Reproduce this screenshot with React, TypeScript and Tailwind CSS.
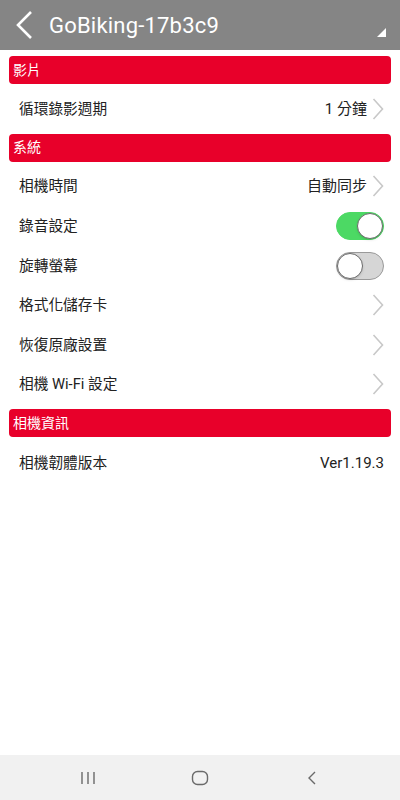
import React from "react";

const font = { fontFamily: '"Roboto", "Noto Sans CJK TC", sans-serif' };

function Chevron() {
  return (
    <svg width="12" height="24" viewBox="0 0 12 24" className="ml-[5px] shrink-0">
      <path d="M1.5 2 L10.5 12 L1.5 22" fill="none" stroke="#c8c8c8" strokeWidth="1.6" />
    </svg>
  );
}

function Toggle({ on }: { on: boolean }) {
  return (
    <div
      className={`relative w-[48px] h-[28px] rounded-full border ${
        on ? "bg-[#4cd964] border-[#4cd964]" : "bg-[#d6d6d6] border-[#9a9a9a]"
      }`}
    >
      <div
        className={`absolute top-[0px] w-[26px] h-[26px] rounded-full bg-white border border-[#6a6a6a] shadow ${
          on ? "right-[0px]" : "left-[0px]"
        }`}
      />
    </div>
  );
}

function Section({ title }: { title: string }) {
  return (
    <div className="mx-[9px] h-[28px] rounded-[4px] bg-[#e8002a] flex items-center pl-[4px] text-white text-[14px]">
      {title}
    </div>
  );
}

function Row({ label, value, chevron, toggle }: { label: string; value?: string; chevron?: boolean; toggle?: boolean }) {
  return (
    <div className="h-[39.6px] flex items-center justify-between pl-[19px] pr-[16px] text-[14.7px] text-[#222]">
      <span>{label}</span>
      <div className="flex items-center text-[15px]">
        {value && <span>{value}</span>}
        {chevron && <Chevron />}
        {toggle !== undefined && <Toggle on={toggle} />}
      </div>
    </div>
  );
}

export default function App() {
  return (
    <div className="w-[400px] h-[800px] bg-white flex flex-col" style={font}>
      {/* header */}
      <div className="h-[50px] bg-[#858585] flex items-center relative shrink-0">
        <svg width="20" height="30" viewBox="0 0 20 30" className="ml-[14px]">
          <path d="M17 2 L4 15 L17 28" fill="none" stroke="white" strokeWidth="2.6" />
        </svg>
        <span className="ml-[15px] text-white text-[22px] tracking-[0.2px]">GoBiking-17b3c9</span>
        <svg width="9" height="9" viewBox="0 0 9 9" className="absolute right-[14px] bottom-[13px]">
          <path d="M9 0 L9 9 L0 9 Z" fill="white" />
        </svg>
      </div>

      <div className="flex-1 pt-[6px]">
        <Section title="影片" />
        <div className="pt-[5px] pb-[5px]">
          <Row label="循環錄影週期" value="1 分鐘" chevron />
        </div>
        <Section title="系統" />
        <div className="pt-[5px] pb-[5px]">
          <Row label="相機時間" value="自動同步" chevron />
          <Row label="錄音設定" toggle={true} />
          <Row label="旋轉螢幕" toggle={false} />
          <Row label="格式化儲存卡" chevron />
          <Row label="恢復原廠設置" chevron />
          <Row label="相機 Wi-Fi 設定" chevron />
        </div>
        <Section title="相機資訊" />
        <div className="pt-[6px]">
          <Row label="相機韌體版本" value="Ver1.19.3" />
        </div>
      </div>

      {/* android nav bar */}
      <div className="h-[45px] bg-[#f1f1f1] flex items-center justify-center shrink-0">
        <div className="w-[112px] flex justify-center">
          <svg width="16" height="14" viewBox="0 0 16 14">
            <path d="M2 1 V13 M8 1 V13 M14 1 V13" stroke="#6a6a6a" strokeWidth="1.4" />
          </svg>
        </div>
        <div className="w-[112px] flex justify-center">
          <svg width="18" height="16" viewBox="0 0 18 16">
            <rect x="1.5" y="1.5" width="15" height="13" rx="5" fill="none" stroke="#6a6a6a" strokeWidth="1.4" />
          </svg>
        </div>
        <div className="w-[112px] flex justify-center">
          <svg width="10" height="16" viewBox="0 0 10 16">
            <path d="M8 2 L2 8 L8 14" fill="none" stroke="#6a6a6a" strokeWidth="1.4" />
          </svg>
        </div>
      </div>
    </div>
  );
}
